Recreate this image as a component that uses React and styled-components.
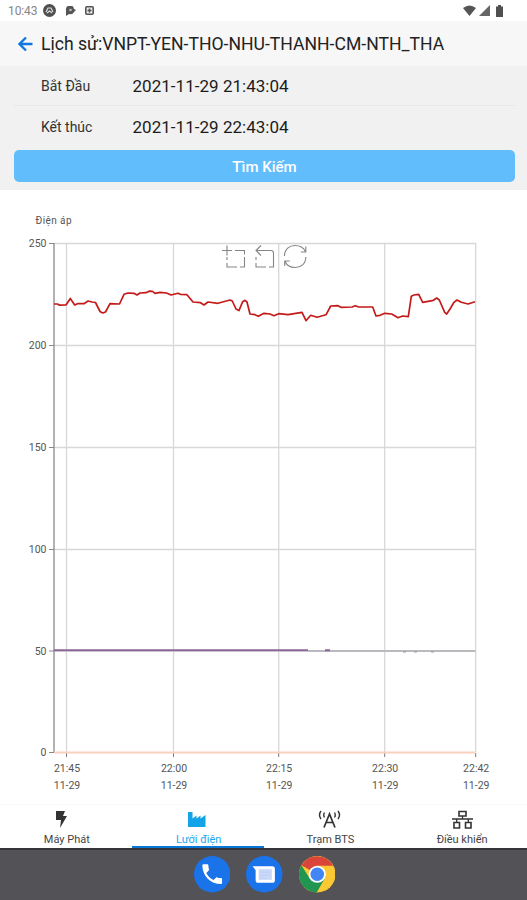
import React from "react";
import styled, { createGlobalStyle } from "styled-components";

const GlobalStyle = createGlobalStyle`
  * { box-sizing: border-box; }
  body {
    margin: 0;
    background: #fff;
    font-family: Roboto, "Noto Sans", sans-serif;
  }
  svg { display: block; flex: none; }
`;

const Screen = styled.div`
  width: 527px;
  height: 900px;
  display: flex;
  flex-direction: column;
  overflow: hidden;
`;
const StatusBar = styled.div`
  height: 21px;
  padding: 0 20px 0 8px;
  display: flex;
  justify-content: space-between;
  align-items: center;
`;
const StatusGroup = styled.div`
  display: flex;
  align-items: center;
  gap: ${(p) => p.$gap}px;
`;
const Clock = styled.span`
  font-size: 12px;
  line-height: 20px;
  width: 30px;
  letter-spacing: -0.1px;
  color: #858585;
  margin-right: -4px;
`;
const Header = styled.header`
  height: 45px;
  background: #f7f7f7;
  padding-left: 18px;
  display: flex;
  align-items: center;
  gap: 8px;
`;
const Title = styled.h1`
  margin: 1px 0 0;
  font-size: 17.6px;
  font-weight: 400;
  color: #222;
  white-space: nowrap;
`;
const Form = styled.div`
  height: 124px;
  background: #f1f1f1;
  padding: 0 12px 9px 14px;
`;
const Field = styled.div`
  height: ${(p) => p.$height}px;
  padding-left: 27px;
  display: flex;
  align-items: center;
  border-bottom: 1px solid ${(p) => (p.$line ? "#e7e7e7" : "transparent")};
`;
const FieldLabel = styled.div`
  width: 91.5px;
  font-size: 14px;
  color: #333;
`;
const FieldValue = styled.div`
  font-size: 17px;
  letter-spacing: 0.03px;
  color: #1c1c1c;
`;
const SearchButton = styled.button`
  display: block;
  width: 501px;
  height: 32px;
  margin-top: 1px;
  padding: 1px 0 0;
  border: none;
  border-radius: 5px;
  background: #62bdfc;
  color: #fff;
  font: 500 15px Roboto, sans-serif;
`;
const ChartArea = styled.div`
  height: 614px;
`;
const Tabs = styled.nav`
  height: 44px;
  display: grid;
  grid-template-columns: repeat(4, 1fr);
  grid-template-rows: 43px;
  border-top: 1px solid #fafafa;
`;
const Tab = styled.div`
  display: flex;
  flex-direction: column;
  align-items: center;
  padding-top: 5px;
  padding-left: 2px;
  font-size: 11px;
  line-height: 13px;
  color: ${(p) => (p.$active ? "#1ba8ee" : "#444")};
  border-bottom: 2px solid ${(p) => (p.$active ? "#0878d8" : "transparent")};
`;
const TabIcon = styled.div`
  height: 20px;
  margin-bottom: 3px;
  margin-right: ${(p) => p.$shift}px;
`;
const Dock = styled.footer`
  height: 52px;
  background: #535256;
  border-top: 2px solid #353437;
  display: flex;
  justify-content: center;
  align-items: center;
  gap: 16px;
  padding: 0 0 1px 2px;
`;

const xTicks = [
  [66.5, "21:45"],
  [173.5, "22:00"],
  [278.7, "22:15"],
  [384.7, "22:30"],
  [475.7, "22:42"],
];
const yTicks = [
  [243.5, "250"],
  [345.5, "200"],
  [447.5, "150"],
  [549.5, "100"],
  [651, "50"],
  [752.5, "0"],
];
const voltage = [
  [54, 304], [57.5, 304], [59.5, 305.2], [66, 305], [70.3, 298.5], [74.7, 305],
  [77.5, 303.7], [84, 303.7], [88, 301], [92, 302], [95.5, 302.5], [100, 311.5],
  [102.7, 313], [105.5, 312], [110, 303.7], [119.5, 304], [124, 294.3], [128, 293],
  [134, 293.3], [137, 295], [140, 293], [146, 292.7], [149, 291.2], [152.5, 291.3],
  [155, 293.3], [160, 292.3], [166.5, 293], [171, 295], [178, 293.2], [181, 294.5],
  [187, 294.7], [193, 302], [200.5, 302.7], [204, 305], [208, 302], [218, 303.3],
  [230, 300], [232.3, 301], [236, 309], [239, 310.5], [242.7, 301.7], [245, 300.3],
  [247, 302], [250, 314], [255, 314.7], [258.3, 316.3], [264, 313.3], [270, 314],
  [274, 315.7], [278.7, 313.7], [288, 314.7], [302, 312.3], [306, 320.7],
  [310.7, 315.3], [317, 317.3], [326, 314.8], [330.7, 306], [338, 305.7],
  [341, 307.3], [352, 307], [355.3, 305.7], [358.7, 307], [372.7, 307], [376, 316],
  [380, 315.3], [384.7, 313.3], [391.7, 314], [398, 317.7], [402.7, 316],
  [408.3, 316.7], [411.3, 296.3], [414, 295], [418.7, 294.3], [422.7, 302.3],
  [433.3, 300.3], [436.7, 298], [439.3, 300], [444.7, 312.3], [446.7, 314],
  [450, 309], [454, 302.3], [457, 300], [461.3, 302.3], [468, 304], [475, 301.7],
];

const VoltageChart = () => (
  <svg width="527" height="614" viewBox="0 190 527 614" fontFamily="Roboto" fontSize="10.5" fill="#555">
    <text x="35.5" y="224" fontSize="10" textLength="36">Điện áp</text>
    <g stroke="#d8d8d8" strokeWidth="1.3">
      {yTicks.slice(0, 5).map(([y]) => <line key={y} x1="54" x2="476" y1={y} y2={y} />)}
      {xTicks.map(([x]) => <line key={x} x1={x} x2={x} y1="243" y2="752" />)}
    </g>
    <path d="M54 243V753" stroke="#929292" strokeWidth="1.4" />
    {yTicks.map(([y, label]) => (
      <g key={label}>
        <path d={`M49 ${y}h5`} stroke="#888" />
        <text x="46.5" y={y + 3.5} textAnchor="end">{label}</text>
      </g>
    ))}
    {xTicks.map(([x, label]) => (
      <g key={label} textAnchor="middle">
        <path d={`M${x} 753v4`} stroke="#777" />
        <text x={x + 0.5} y="771.5">{label}</text>
        <text x={x + 0.5} y="788.5">11-29</text>
      </g>
    ))}
    <path d="M54 752.5H475.5" stroke="#f9cfbe" strokeWidth="2.2" />
    <path d="M308 651H475.5" stroke="#b9babd" strokeWidth="2" />
    <path d="M54 650.3H308M325 650.2h5" stroke="#8b6697" strokeWidth="1.9" />
    <path d="M403 652h3M414 652h3M431 652h3" stroke="#99989d" />
    <polyline
      points={voltage.map((p) => p.join(",")).join(" ")}
      fill="none"
      stroke="#c41a1a"
      strokeWidth="1.7"
      strokeLinejoin="round"
    />
    {/* zoom, zoom reset, restore */}
    <g fill="none" stroke="#858585" strokeWidth="1.1">
      <path d="M222 250.5h10M227 245.5v10M235 250.5h9.5v4M244.5 257v10H240M237 267h-10v-4M227 260v-3" />
      <path d="M261 245.5L256 250.5l5 5M256 250.5h15q2.5 0 2.5 2.5v14H269M266 267h-10v-4M256 260v-3" />
      <path d="M284.5 256c0-7 5-10.5 10.5-10.5c5 0 8.500 2 10.500 6M305.800 246.500v5.500h-5M305.800 257c0 7-5 10.500-10.500 10.500c-5 0-8.500-2-10.200-6M284.700 266v-5h5" />
    </g>
  </svg>
);

const StatusIcons = () => (
  <>
    <svg width="13" height="13" viewBox="0 0 13 13">
      <circle cx="6.5" cy="6.5" r="6.5" fill="#505050" />
      <path d="M3 8l2-4h3l2 4M4 9l2.5-2L9 9" fill="none" stroke="#ddd" strokeWidth="1.2" />
    </svg>
    <svg width="11" height="10" viewBox="0 0 11 10">
      <path d="M1 9V4a4 4 0 0 1 8-1l2 1L9 6a4 4 0 0 1-5 2L1 10z" fill="#555" />
      <circle cx="5.5" cy="4" r="1.3" fill="#bbb" />
    </svg>
    <svg width="9" height="9" viewBox="0 0 9 9">
      <rect x=".8" y=".8" width="7.4" height="7.4" rx="1" fill="#eee" stroke="#555" strokeWidth="1.6" />
      <path d="M4.5 2.5v4M2.5 4.5h4" stroke="#555" strokeWidth="1.6" />
    </svg>
  </>
);

const App = () => (
  <Screen>
    <GlobalStyle />
    <StatusBar>
      <StatusGroup $gap={9}>
        <Clock>10:43</Clock>
        <StatusIcons />
      </StatusGroup>
      <StatusGroup $gap={3}>
        <svg width="13" height="11" viewBox="0 0 13 11">
          <path d="M0 3Q6.5-2 13 3L6.5 11z" fill="#555" />
        </svg>
        <svg width="11" height="11" viewBox="0 0 11 11">
          <path d="M11 0v11H0z" fill="#666" />
        </svg>
        <svg width="14" height="12" viewBox="0 0 14 12">
          <path d="M3 1.500h2V0h3v1.500h2V12H3z" fill="#505050" />
        </svg>
      </StatusGroup>
    </StatusBar>
    <Header>
      <svg width="15" height="16" viewBox="0 0 15 16">
        <path d="M14.5 8H1.800M8 1.500L1.500 8L8 14.500" fill="none" stroke="#0f78de" strokeWidth="2.300" />
      </svg>
      <Title>Lịch sử:VNPT-YEN-THO-NHU-THANH-CM-NTH_THA</Title>
    </Header>
    <Form>
      <Field $height={40} $line>
        <FieldLabel>Bắt Đầu</FieldLabel>
        <FieldValue>2021-11-29 21:43:04</FieldValue>
      </Field>
      <Field $height={43}>
        <FieldLabel>Kết thúc</FieldLabel>
        <FieldValue>2021-11-29 22:43:04</FieldValue>
      </Field>
      <SearchButton>Tìm Kiếm</SearchButton>
    </Form>
    <ChartArea>
      <VoltageChart />
    </ChartArea>
    <Tabs>
      <Tab>
        <TabIcon $shift={12}>
          <svg width="12" height="18" viewBox="0 0 12 18">
            <path d="M1 1h9L8 6h4L5 18l1-8H1z" fill="#333" />
          </svg>
        </TabIcon>
        Máy Phát
      </Tab>
      <Tab $active>
        <TabIcon $shift={4}>
          <svg width="18" height="18" viewBox="0 0 18 18">
            <path d="M0 17V2h4.500v6.500l4-3v3l4-3v3l5-3.500V17z" fill="#13a4e8" />
          </svg>
        </TabIcon>
        Lưới điện
      </Tab>
      <Tab>
        <TabIcon $shift={1}>
          <svg width="23" height="18" viewBox="0 0 23 18" fill="none" stroke="#333" strokeWidth="1.7">
            <path d="M6 17.500L11.500 4L17 17.500M8 12.500h7" />
            <path d="M3 1Q0 5 3 9M20 1Q23 5 20 9M6.500 2.500Q5 5 6.500 7.500M16.500 2.500Q18 5 16.500 7.500" strokeWidth="1.4" />
          </svg>
        </TabIcon>
        Trạm BTS
      </Tab>
      <Tab>
        <TabIcon $shift={0}>
          <svg width="21" height="19" viewBox="0 0 21 19" fill="none" stroke="#333" strokeWidth="1.6">
            <path d="M7 1.500h7v4.500H7zM2 12.500h5.500V18H2zM13.500 12.500H19V18h-5.500z" />
            <path d="M10.500 6v3M4.700 12.500V9M16.300 12.500V9M0 9h21" strokeWidth="1.3" />
          </svg>
        </TabIcon>
        Điều khiển
      </Tab>
    </Tabs>
    <Dock>
      <svg width="36.5" height="36.5" viewBox="0 0 36 36">
        <circle cx="18" cy="18" r="18" fill="#1a73e8" />
        <path
          transform="translate(5 5) scale(1.08)"
          fill="#fff"
          d="M6.620 10.790c1.440 2.830 3.760 5.140 6.590 6.590l2.200-2.200c.27-.27.67-.36 1.020-.24 1.120.37 2.330.57 3.570.57.550 0 1 .45 1 1V20c0 .55-.45 1-1 1-9.390 0-17-7.610-17-17 0-.55.45-1 1-1h3.500c.55 0 1 .45 1 1 0 1.250.2 2.450.57 3.570.11.350.030.740-.250 1.020l-2.200 2.200z"
        />
      </svg>
      <svg width="36.5" height="36.5" viewBox="0 0 36 36">
        <circle cx="18" cy="18" r="18" fill="#1a73e8" />
        <path d="M6.500 10H26q2.500 0 2.500 2.500V24q0 2.500-2.500 2.500H12Q9.500 26.500 9.500 24V14z" fill="#fff" />
        <rect x="12.5" y="13" width="13" height="10.5" fill="#cad9f8" />
        <path d="M14 16h10M14 19h10M14 22h7" stroke="#bdd0f6" />
      </svg>
      <svg width="36.5" height="36.5" viewBox="0 0 36 36">
        <circle cx="18" cy="18" r="18" fill="#fcc934" />
        <path d="M18 18L2.400 9A18 18 0 0 1 33.600 9.500H18z" fill="#d9453a" />
        <path d="M2.400 9A18 18 0 0 0 17.500 36L25.500 22L18 18L10.500 22z" fill="#219653" />
        <circle cx="18" cy="18" r="8.5" fill="#fff" />
        <circle cx="18" cy="18" r="6.7" fill="#4285f4" />
      </svg>
    </Dock>
  </Screen>
);

export default App;
